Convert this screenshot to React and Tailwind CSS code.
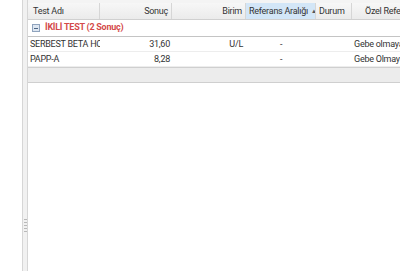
import React from 'react';

const cols = [
  { label: 'Test Adı', w: 'w-[72px]', align: 'text-left pl-[5px]' },
  { label: 'Sonuç', w: 'w-[72px]', align: 'text-right pr-[3px]' },
  { label: 'Birim', w: 'w-[74px]', align: 'text-right pr-[3px]' },
  { label: 'Referans Aralığı', w: 'w-[70px]', align: 'text-left pl-[3px]', sorted: true },
  { label: 'Durum', w: 'w-[36px]', align: 'text-left pl-[3px]' },
  { label: 'Özel Referans', w: 'w-[90px]', align: 'text-left pl-[13px]' },
];

const rows = [
  ['SERBEST BETA HCG', '31,60', 'U/L', '-', '', 'Gebe olmayanlar'],
  ['PAPP-A', '8,28', '', '-', '', 'Gebe Olmayanlar'],
];

const cellAlign = [
  'text-left pl-[2px]',
  'text-right pr-[2px]',
  'text-right pr-[3px]',
  'text-center',
  'text-left',
  'text-left pl-[2px]',
];

const App = () => {
  return (
    <div className="flex h-[271px] w-[400px] overflow-hidden bg-white font-['Roboto',sans-serif] text-[9px] tracking-[-0.25px] text-[#333]">
      {/* left blank panel */}
      <div className="w-[22px] shrink-0 bg-white"></div>

      {/* splitter */}
      <div className="flex w-[6px] shrink-0 flex-col items-center justify-center border-x border-[#d6d6d6] bg-[#f1f1f1] pt-[180px]">
        <div className="flex flex-col gap-[2px]">
          <div className="h-[1px] w-[3px] bg-[#b8b8b8]"></div>
          <div className="h-[1px] w-[3px] bg-[#b8b8b8]"></div>
          <div className="h-[1px] w-[3px] bg-[#b8b8b8]"></div>
          <div className="h-[1px] w-[3px] bg-[#b8b8b8]"></div>
          <div className="h-[1px] w-[3px] bg-[#b8b8b8]"></div>
        </div>
      </div>

      {/* grid */}
      <div className="flex min-w-0 flex-1 flex-col overflow-hidden">
        <div className="h-[3px] bg-[#f4f4f4]"></div>
        {/* header */}
        <div className="flex h-[17px] border-b border-[#d0d0d0] bg-gradient-to-b from-[#f7f7f7] to-[#ebebeb]">
          {cols.map((c) => (
            <div
              key={c.label}
              className={`${c.w} shrink-0 overflow-hidden whitespace-nowrap border-r border-[#d6d6d6] leading-[16px] ${c.align} ${c.sorted ? 'bg-[#d3e6f7]' : ''}`}
            >
              {c.label}
              {c.sorted && <span className="ml-[3px] text-[6px] text-[#555] align-[1px]">▲</span>}
            </div>
          ))}
        </div>

        {/* group row */}
        <div className="flex h-[17px] items-center gap-[5px] border-b border-[#c4c4c4] bg-white pl-[4px]">
          <div className="flex h-[8px] w-[8px] items-center justify-center border border-[#8fa3bd] bg-[#dde6f1]">
            <div className="h-[1px] w-[4px] bg-[#4c6585]"></div>
          </div>
          <span className="font-bold text-[#d44a4a]">İKİLİ TEST (2 Sonuç)</span>
        </div>

        {/* data rows */}
        {rows.map((r, i) => (
          <div key={i} className="flex h-[15px] border-b border-[#ededed] bg-white">
            {r.map((v, j) => (
              <div
                key={j}
                className={`${cols[j].w} shrink-0 overflow-hidden whitespace-nowrap leading-[14px] ${cellAlign[j]}`}
              >
                {v}
              </div>
            ))}
          </div>
        ))}

        {/* summary row */}
        <div className="h-[16px] border-y border-[#cfcfcf] bg-[#ececec]"></div>

        <div className="flex-1 bg-white"></div>
      </div>
    </div>
  );
};

export default App;
